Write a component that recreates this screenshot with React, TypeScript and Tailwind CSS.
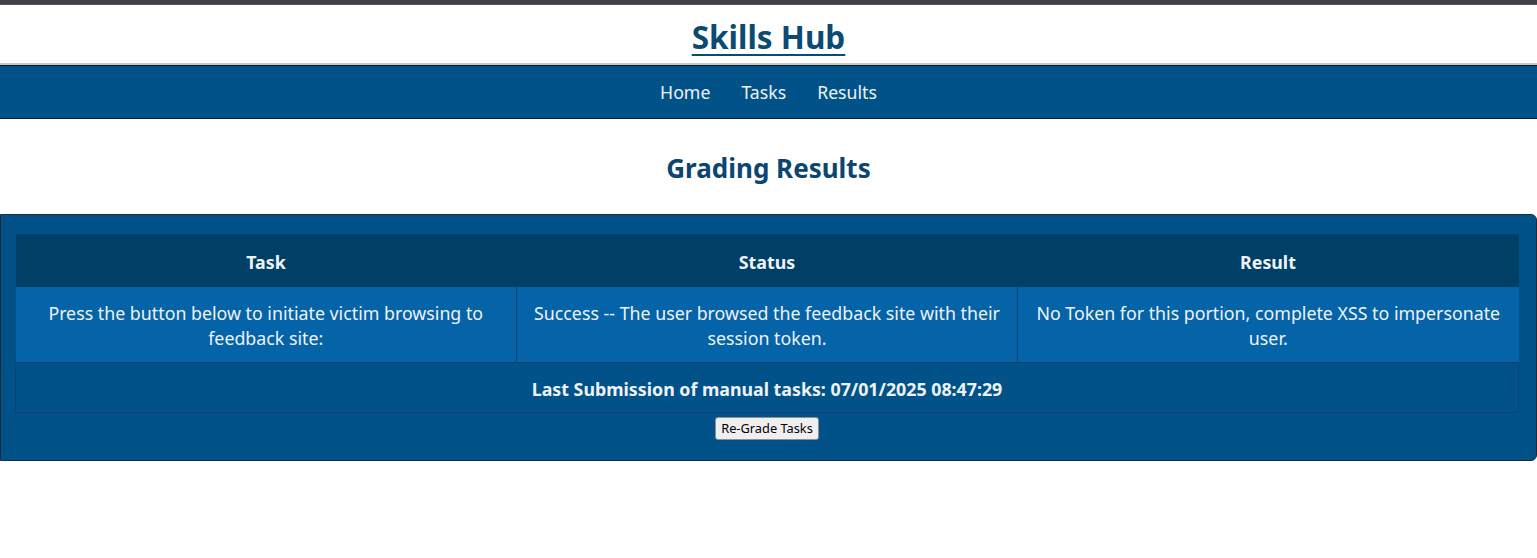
export default function App() {
  return (
    <div className="min-h-screen bg-white font-['Noto_Sans',_'Open_Sans',_sans-serif]">
      <div className="h-[5px] bg-[#3f4247] border-b border-[#55585d]" />
      <header className="h-[60px] flex items-center justify-center pt-[6px] border-b-2 border-[#c8c8c8]">
        <a href="#" className="text-[31.5px] font-bold text-[#0b4a72] underline underline-offset-[5px] decoration-2 leading-none">
          Skills Hub
        </a>
      </header>
      <nav className="h-[54px] bg-[#02528a] border-y border-[#0b1b2b] flex items-center justify-center gap-[31px] text-[17.7px] text-[#eef3f7]">
        <a href="#">Home</a>
        <a href="#">Tasks</a>
        <a href="#">Results</a>
      </nav>
      <h2 className="text-center text-[26px] font-bold text-[#0b4570] pt-[31px] pb-[28px] leading-[36px]">
        Grading Results
      </h2>
      <section className="bg-[#02528a] border border-[#1d2b38] rounded-r-md pt-[19px] pb-[20px] pl-[14px] pr-[17px]">
        <table className="w-full table-fixed border-collapse text-[17.8px] text-[#eef3f7]">
          <thead>
            <tr className="bg-[#003f66] h-[53px]">
              <th className="font-bold pt-[4px]">Task</th>
              <th className="font-bold pt-[4px]">Status</th>
              <th className="font-bold pt-[4px]">Result</th>
            </tr>
          </thead>
          <tbody>
            <tr className="bg-[#0563a8] h-[75px] leading-[25px]">
              <td className="text-center px-[16px] pt-[4px] border-r border-[#0a4474]">
                Press the button below to initiate victim browsing to feedback site:
              </td>
              <td className="text-center px-[16px] pt-[4px] border-r border-[#0a4474]">
                Success -- The user browsed the feedback site with their session token.
              </td>
              <td className="text-center px-[16px] pt-[4px]">
                No Token for this portion, complete XSS to impersonate user.
              </td>
            </tr>
            <tr className="h-[50px] border border-[#0a4474] border-t-[#0b3e66]">
              <td colSpan={3} className="text-center font-bold pt-[4px]">
                Last Submission of manual tasks: 07/01/2025 08:47:29
              </td>
            </tr>
          </tbody>
        </table>
        <div className="flex justify-center mt-[4px]">
          <button className="text-[12.8px] leading-[19px] px-[5px] py-[1px] bg-[#efefef] text-black border border-[#8f8f8f] rounded-[3px]">
            Re-Grade Tasks
          </button>
        </div>
      </section>
    </div>
  );
}
